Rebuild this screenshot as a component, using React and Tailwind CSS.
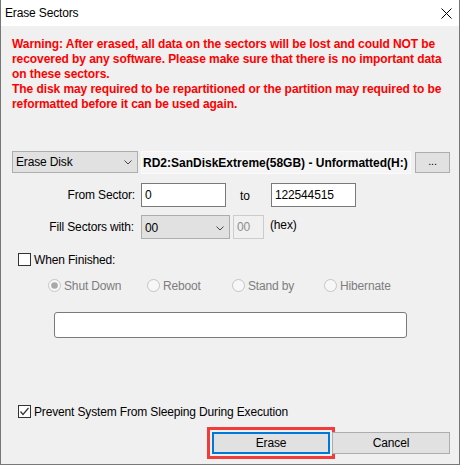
import React from 'react';

const FONT = { fontFamily: '"Liberation Sans", Arial, sans-serif' };

const WARNING = [
  'Warning: After erased, all data on the sectors will be lost and could NOT be',
  'recovered by any software. Please make sure that there is no important data',
  'on these sectors.',
  'The disk may required to be repartitioned or the partition may required to be',
  'reformatted before it can be used again.',
];

function Chevron() {
  return (
    <svg width="8" height="5" viewBox="0 0 8 5" className="shrink-0">
      <polyline points="0.5,0.5 4,4 7.5,0.5" fill="none" stroke="#444" strokeWidth="1" />
    </svg>
  );
}

function CheckBox({ checked }) {
  return (
    <span className="w-[13px] h-[13px] border border-[#333] bg-white flex items-center justify-center shrink-0">
      {checked && (
        <svg width="11" height="11" viewBox="0 0 11 11">
          <polyline points="1.5,5.5 4,8.5 9.5,2" fill="none" stroke="#333" strokeWidth="1.2" />
        </svg>
      )}
    </span>
  );
}

function Radio({ selected }) {
  return (
    <svg width="13" height="13" viewBox="0 0 13 13" className="shrink-0">
      <circle cx="6.5" cy="6.5" r="6" fill="#f7f7f7" stroke="#c4c4c4" strokeWidth="1" />
      {selected && <circle cx="6.5" cy="6.5" r="3.3" fill="#a8a8a8" />}
    </svg>
  );
}

export default function App() {
  return (
    <div className="w-[461px] h-[466px] bg-white text-[12px] text-black tracking-[-0.15px]" style={FONT}>
      <div className="w-[460px] h-[465px] flex flex-col border-x border-b border-[#777]">
        {/* title bar */}
        <div className="h-[26px] bg-white flex items-center justify-between pl-[4px] pr-[7px] shrink-0">
          <span>Erase Sectors</span>
          <svg width="11" height="11" viewBox="0 0 11 11">
            <path d="M0.5 0.5 L10.5 10.5 M10.5 0.5 L0.5 10.5" stroke="#000" strokeWidth="1" />
          </svg>
        </div>

        <div className="flex-1 bg-[#f0f0f0] flex flex-col">
          <div className="mt-[11px] ml-[11px] text-[#ff0000] font-bold leading-[15px] whitespace-nowrap tracking-[-0.07px]">
            {WARNING.map((l) => (
              <div key={l}>{l}</div>
            ))}
          </div>

          {/* disk row */}
          <div className="mt-[39px] ml-[11px] h-[23px] flex items-start">
            <div className="w-[126px] h-[22px] bg-[#e1e1e1] border border-[#adadad] flex items-center justify-between pl-[3px] pr-[5px]">
              <span>Erase Disk</span>
              <Chevron />
            </div>
            <div className="ml-[3px] w-[270px] h-[23px] bg-[#f5f5f5] border border-[#fbfbfb] flex items-center pl-[1px] font-bold whitespace-nowrap overflow-hidden tracking-normal">
              RD2:SanDiskExtreme(58GB) - Unformatted(H:)
            </div>
            <div className="ml-[4px] mt-[1px] w-[35px] h-[21px] bg-[#e1e1e1] border border-[#adadad] flex items-center justify-center text-[11px] leading-none pb-[2px]">
              ...
            </div>
          </div>

          {/* from sector */}
          <div className="mt-[9px] ml-[11px] h-[24px] flex items-center">
            <div className="w-[129px] text-right pr-[6px]">From Sector:</div>
            <div className="w-[85px] h-[24px] bg-white border border-[#7a7a7a] flex items-center pl-[3px]">0</div>
            <div className="w-[45px] pl-[14px] pt-[2px]">to</div>
            <div className="w-[85px] h-[24px] bg-white border border-[#7a7a7a] flex items-center pl-[3px]">122544515</div>
          </div>

          {/* fill sectors */}
          <div className="mt-[8px] ml-[11px] h-[24px] flex items-center">
            <div className="w-[129px] text-right pr-[7px]">Fill Sectors with:</div>
            <div className="w-[89px] h-[24px] bg-[#e1e1e1] border border-[#adadad] flex items-center justify-between pl-[3px] pr-[5px] pt-[2px]">
              <span>00</span>
              <Chevron />
            </div>
            <div className="ml-[3px] w-[31px] h-[24px] bg-[#f0f0f0] border border-[#cccccc] flex items-center pl-[3px] text-[#8d8d8d]">00</div>
            <div className="ml-[6px] -mt-[5px]">(hex)</div>
          </div>

          {/* when finished */}
          <div className="mt-[14px] ml-[17px] h-[13px] flex items-center gap-[3px]">
            <CheckBox />
            <span>When Finished:</span>
          </div>

          {/* radios */}
          <div className="mt-[13px] h-[13px] flex items-center text-[#7d7d7d]">
            <div className="ml-[47px] w-[99px] flex items-center gap-[3px]">
              <Radio selected />
              <span>Shut Down</span>
            </div>
            <div className="w-[85px] flex items-center gap-[3px]">
              <Radio />
              <span>Reboot</span>
            </div>
            <div className="w-[92px] flex items-center gap-[3px]">
              <Radio />
              <span>Stand by</span>
            </div>
            <div className="flex items-center gap-[3px]">
              <Radio />
              <span>Hibernate</span>
            </div>
          </div>

          <div className="mt-[20px] ml-[53px] w-[353px] h-[26px] bg-white border border-[#7a7a7a] rounded-[3px]" />

          {/* prevent sleeping */}
          <div className="mt-[67px] ml-[17px] h-[13px] flex items-center gap-[3px]">
            <CheckBox checked />
            <span>Prevent System From Sleeping During Execution</span>
          </div>

          {/* buttons */}
          <div className="mt-[14px] ml-[211px] flex gap-[2px]">
            <button className="w-[118px] h-[22px] bg-[#e1e1e1] border-2 border-[#0078d7] flex items-center justify-center outline-[3px] outline-solid outline-[#f23c3c] outline-offset-[2px]">
              Erase
            </button>
            <button className="w-[118px] h-[22px] bg-[#e1e1e1] border border-[#adadad] flex items-center justify-center">
              Cancel
            </button>
          </div>
        </div>
      </div>
    </div>
  );
}
